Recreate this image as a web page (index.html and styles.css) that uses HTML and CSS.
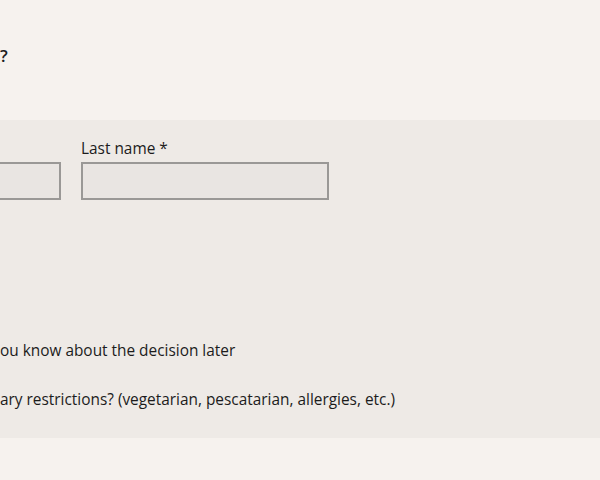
FILE: index.html
```html
<!DOCTYPE html>
<html lang="en">
<head>
  <meta charset="UTF-8" />
  <title>RSVP</title>
  <link rel="stylesheet" href="styles.css">
</head>
<body>
  <div class="intro">
    <h2 class="question">?</h2>
  </div>

  <section class="form-band">
    <div class="name-row">
      <div class="field field-first">
        <input type="text" class="text-input" />
      </div>
      <div class="field field-last">
        <label class="field-label">Last name *</label>
        <input type="text" class="text-input" />
      </div>
    </div>

    <p class="option-text">ou know about the decision later</p>
    <p class="option-text diet">ary restrictions? (vegetarian, pescatarian, allergies, etc.)</p>
  </section>
</body>
</html>
```

FILE: styles.css
```css
body {
  font-family: "Open Sans", sans-serif;
  background-color: #f6f2ee;
  color: #1c1c1c;
  margin: 0;
  padding: 0;
  overflow: hidden;
}

.intro {
  height: 120px;
}

.question {
  margin: 0;
  padding-top: 44px;
  font-size: 17px;
  font-weight: 600;
  line-height: 24px;
}

.form-band {
  background-color: #eeeae6;
  height: 318px;
  box-sizing: border-box;
  padding-top: 18px;
}

.name-row {
  display: flex;
  gap: 20px;
}

.field {
  display: flex;
  flex-direction: column;
}

.field-first {
  width: 61px;
  justify-content: flex-end;
}

.field-first .text-input {
  border-left: none;
}

.field-last {
  width: 248px;
}

.field-label {
  font-size: 15.4px;
  line-height: 22px;
  margin-bottom: 2px;
}

.text-input {
  height: 38px;
  box-sizing: border-box;
  border: 2px solid #9a9896;
  background-color: #e9e5e2;
  margin: 0;
}

.option-text {
  margin: 0;
  font-size: 15.4px;
  line-height: 22px;
  margin-top: 140px;
}

.option-text.diet {
  margin-top: 27px;
}
```
